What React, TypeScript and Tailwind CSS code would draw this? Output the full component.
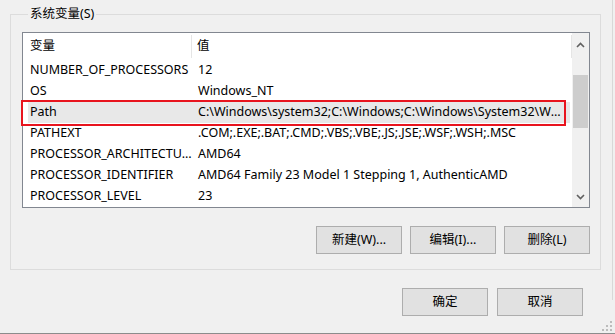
import React from 'react';

const rows = [
  { name: 'NUMBER_OF_PROCESSORS', value: '12' },
  { name: 'OS', value: 'Windows_NT' },
  { name: 'Path', value: 'C:\\Windows\\system32;C:\\Windows;C:\\Windows\\System32\\Wbem;C:\\Windows\\System32\\WindowsPowerShell\\v1.0\\', selected: true },
  { name: 'PATHEXT', value: '.COM;.EXE;.BAT;.CMD;.VBS;.VBE;.JS;.JSE;.WSF;.WSH;.MSC' },
  { name: 'PROCESSOR_ARCHITECTURE', value: 'AMD64' },
  { name: 'PROCESSOR_IDENTIFIER', value: 'AMD64 Family 23 Model 1 Stepping 1, AuthenticAMD' },
  { name: 'PROCESSOR_LEVEL', value: '23' },
];

function Btn({ label }: { label: string }) {
  return (
    <button className="w-[86px] h-[28px] shrink-0 bg-[#e1e1e1] border border-[#adadad] text-[12.5px] text-black flex items-center justify-center">
      {label}
    </button>
  );
}

function Chevron({ down }: { down?: boolean }) {
  return (
    <svg width="9" height="6" viewBox="0 0 9 6" className={down ? 'rotate-180' : ''}>
      <path d="M1 5 L4.5 1.5 L8 5" fill="none" stroke="#606060" strokeWidth="1.6" />
    </svg>
  );
}

export default function App() {
  return (
    <div
      className="w-[615px] h-[334px] bg-[#f0f0f0] overflow-hidden flex flex-col border-b border-[#8c8c8c] relative"
      style={{ fontFamily: '"Noto Sans", "Noto Sans CJK SC", sans-serif' }}
    >
      {/* group box */}
      <fieldset className="ml-[10px] mt-[6px] w-[591px] min-w-0 border border-[#dcdcdc] pl-[11px] pr-[10px] pb-[15px]">
        <legend className="ml-[6px] px-[2px] text-[12.5px] leading-[16px] text-black">系统变量(S)</legend>

        <div className="relative mt-[10px] h-[176px] border border-[#828790] bg-white flex">
          <div className="flex-1 min-w-0 flex flex-col">
            {/* header */}
            <div className="h-[27px] flex text-[12.5px] text-black">
              <div className="w-[169px] pl-[7px] flex items-center border-r border-[#e5e5e5] my-[2px]">变量</div>
              <div className="flex-1 pl-[5px] flex items-center border-r border-[#e5e5e5] my-[2px]">值</div>
            </div>
            {rows.map((r) => (
              <div
                key={r.name}
                className={`h-[21px] flex items-center text-[12.5px] text-black min-w-0 ${r.selected ? 'bg-[#e8e8e8] ml-[5px] mr-[2px]' : ''}`}
              >
                <div className={`${r.selected ? 'w-[164px] pl-[2px]' : 'w-[169px] pl-[7px]'} shrink-0 truncate`}>{r.name}</div>
                <div className="flex-1 min-w-0 pl-[6px] pr-[4px] truncate">{r.value}</div>
              </div>
            ))}
          </div>

          {/* scrollbar */}
          <div className="w-[17px] shrink-0 bg-[#f0f0f0] flex flex-col items-center">
            <div className="h-[20px] flex items-center justify-center mt-[2px]">
              <Chevron />
            </div>
            <div className="mt-[20px] w-[15px] h-[53px] bg-[#cdcdcd]" />
            <div className="flex-1" />
            <div className="h-[20px] flex items-center justify-center">
              <Chevron down />
            </div>
          </div>

          {/* highlight annotation */}
          <div className="absolute left-[-2px] top-[67px] w-[545px] h-[26px] border-2 border-[#e8141e] pointer-events-none" />
        </div>

        <div className="mt-[18px] flex justify-end gap-[8px]">
          <Btn label="新建(W)..." />
          <Btn label="编辑(I)..." />
          <Btn label="删除(L)" />
        </div>
      </fieldset>

      <div className="mt-[18px] pr-[32px] flex justify-end gap-[9px]">
        <Btn label="确定" />
        <Btn label="取消" />
      </div>

      {/* window right edge */}
      <div className="absolute right-[2px] top-0 h-[300px] w-px bg-[#d8d8d8]" />

      {/* resize grip */}
      <svg className="absolute right-[3px] bottom-[2px]" width="10" height="10" viewBox="0 0 10 10">
        <g fill="#bcbcbc">
          <rect x="8" y="0" width="2" height="2" />
          <rect x="4" y="4" width="2" height="2" />
          <rect x="8" y="4" width="2" height="2" />
          <rect x="0" y="8" width="2" height="2" />
          <rect x="4" y="8" width="2" height="2" />
          <rect x="8" y="8" width="2" height="2" />
        </g>
      </svg>
    </div>
  );
}
